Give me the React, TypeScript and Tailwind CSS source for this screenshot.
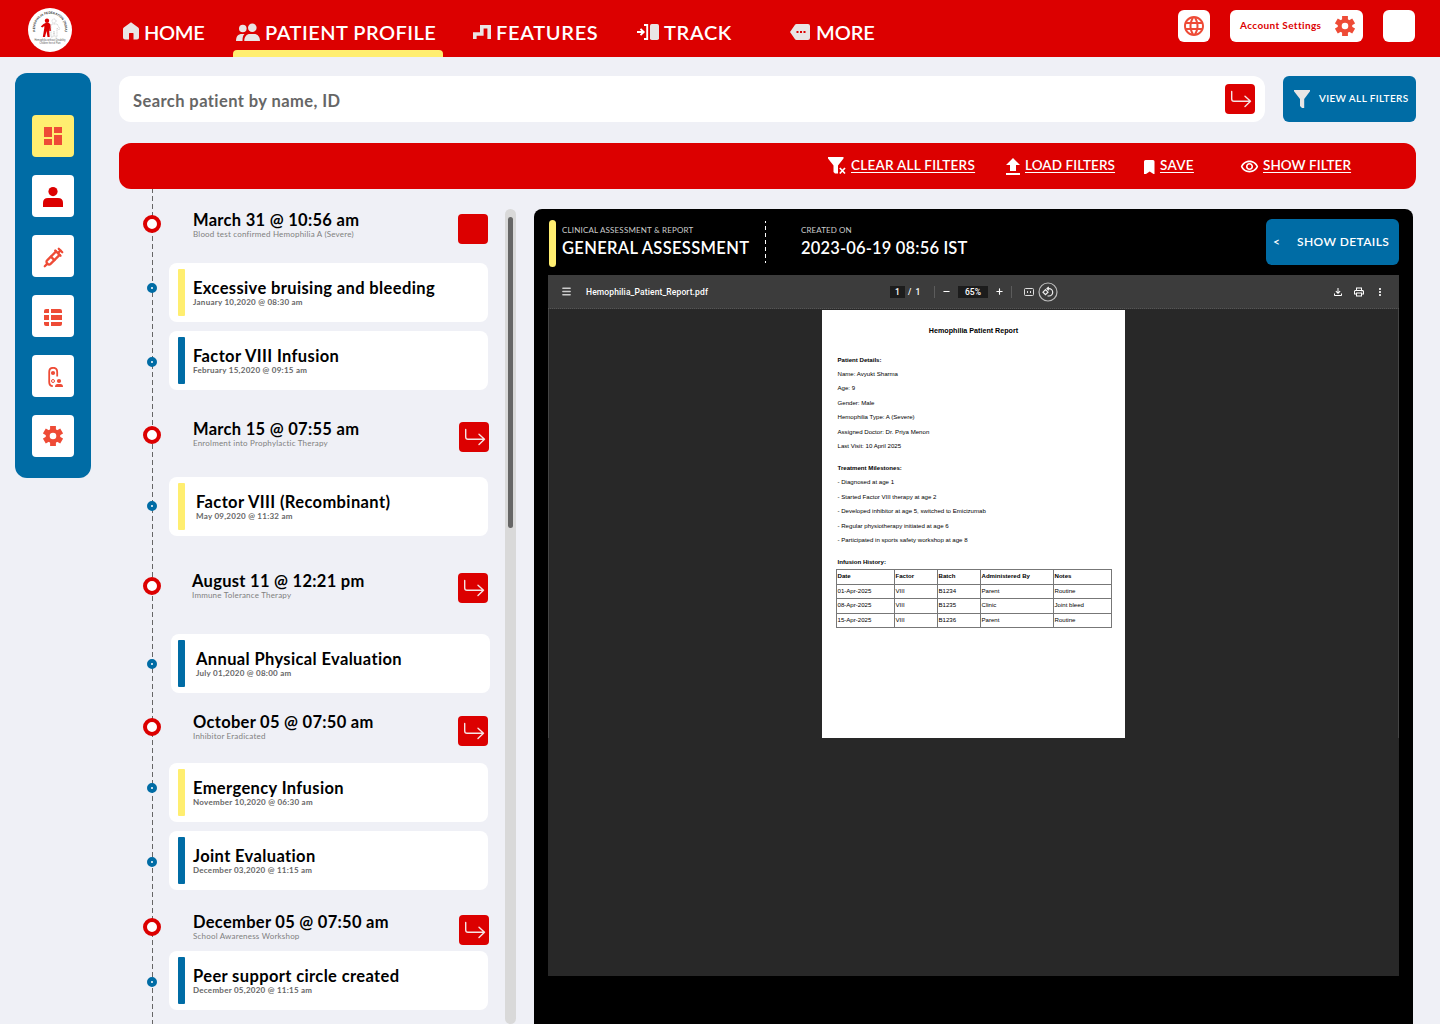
import type { ReactNode } from "react";
import { Menu, Minus, Plus, Syringe } from "lucide-react";
import {
  MdDashboard,
  MdLanguage,
  MdMoreVert,
  MdOutlineFileDownload,
  MdOutlinePrint,
  MdOutlineRemoveRedEye,
  MdUpload,
} from "react-icons/md";

type TimelineRow = {
  kind: "milestone" | "event";
  title: string;
  note: string;
  gap: string;
  marker: string;
  accent?: string;
  inset?: string;
  shift?: string;
  action?: string;
  blank?: boolean;
};

const YELLOW = "bg-[#ffee70]";
const BLUE = "bg-[#006ca5]";

const timeline: TimelineRow[] = [
  { kind: "milestone", title: "March 31 @ 10:56 am", note: "Blood test confirmed Hemophilia A (Severe)", gap: "mt-5", marker: "mt-1.5", action: "mt-[5px] mr-[3px]", blank: true },
  { kind: "event", title: "Excessive bruising and bleeding", note: "January 10,2020 @ 08:30 am", gap: "mt-3.5", marker: "mt-5", accent: YELLOW, inset: "ml-2" },
  { kind: "event", title: "Factor VIII Infusion", note: "February 15,2020 @ 09:15 am", gap: "mt-[9px]", marker: "mt-[26px]", accent: BLUE, inset: "ml-2" },
  { kind: "milestone", title: "March 15 @ 07:55 am", note: "Enrolment into Prophylactic Therapy", gap: "mt-7", marker: "mt-2", action: "mt-1 mr-0.5" },
  { kind: "event", title: "Factor VIII (Recombinant)", note: "May 09,2020 @ 11:32 am", gap: "mt-[19px]", marker: "mt-6", accent: YELLOW, inset: "ml-[11px]" },
  { kind: "milestone", title: "August 11 @ 12:21 pm", note: "Immune Tolerance Therapy", gap: "mt-[34px]", marker: "mt-[7px]", action: "mt-[3px] mr-[3px]", shift: "ml-[31px]" },
  { kind: "event", title: "Annual Physical Evaluation", note: "July 01,2020 @ 08:00 am", gap: "mt-6", marker: "mt-[25px]", accent: BLUE, inset: "ml-[11px]", shift: "ml-3.5 pl-[7px]" },
  { kind: "milestone", title: "October 05 @ 07:50 am", note: "Inhibitor Eradicated", gap: "mt-[18px]", marker: "mt-[7px]", action: "mt-[5px] mr-[3px]" },
  { kind: "event", title: "Emergency Infusion", note: "November 10,2020 @ 06:30 am", gap: "mt-3", marker: "mt-5", accent: YELLOW, inset: "ml-2" },
  { kind: "event", title: "Joint Evaluation", note: "December 03,2020 @ 11:15 am", gap: "mt-[9px]", marker: "mt-[26px]", accent: BLUE, inset: "ml-2" },
  { kind: "milestone", title: "December 05 @ 07:50 am", note: "School Awareness Workshop", gap: "mt-[21px]", marker: "mt-[7px]", action: "mt-1 mr-0.5" },
  { kind: "event", title: "Peer support circle created", note: "December 05,2020 @ 11:15 am", gap: "mt-0", marker: "mt-[26px]", accent: BLUE, inset: "ml-2" },
];

const details = [
  "Name: Avyukt Sharma",
  "Age: 9",
  "Gender: Male",
  "Hemophilia Type: A (Severe)",
  "Assigned Doctor: Dr. Priya Menon",
  "Last Visit: 10 April 2025",
];

const milestones = [
  "- Diagnosed at age 1",
  "- Started Factor VIII therapy at age 2",
  "- Developed inhibitor at age 5, switched to Emicizumab",
  "- Regular physiotherapy initiated at age 6",
  "- Participated in sports safety workshop at age 8",
];

const infusions = [
  ["01-Apr-2025", "VIII", "B1234", "Parent", "Routine"],
  ["08-Apr-2025", "VIII", "B1235", "Clinic", "Joint bleed"],
  ["15-Apr-2025", "VIII", "B1236", "Parent", "Routine"],
];

function Logo() {
  return (
    <svg viewBox="0 0 44 44" className="h-11 w-11 shrink-0">
      <circle cx="22" cy="22" r="22" fill="#fff" />
      <path id="logo-arc" d="M7.6 25A15 15 0 1 1 36.4 25" fill="none" />
      <text fontSize="3.2" fontWeight="700" fill="#333" fontFamily="Liberation Sans, sans-serif">
        <textPath href="#logo-arc" startOffset="1.5" textLength="52">HEMOPHILIA FEDERATION (INDIA)</textPath>
      </text>
      <g fill="#dc0000">
        <circle cx="19" cy="12.8" r="2.2" />
        <path d="M15.5 16l2-1h3.5l1.5 1.5.5 6.5h-1.5l-.5-3 .7 9H19.5l-1-6-1.5 6h-2.2l1.5-9v-2l-2 1.5-1.5-1z" />
      </g>
      <g fill="none" stroke="#bbb" strokeWidth=".6" strokeDasharray="1.2 .5">
        <circle cx="26" cy="13" r="2" />
        <path d="M24 16h5l3 5-1 1-2-2v9h-2l-1-6-1 6h-2v-12z" />
      </g>
      <g fill="#555" fontSize="2.9" fontFamily="Liberation Sans, sans-serif" textAnchor="middle">
        <text x="22" y="33.2" textLength="31" lengthAdjust="spacingAndGlyphs">Hemophilia without Disability</text>
        <text x="22" y="36.2" textLength="21" lengthAdjust="spacingAndGlyphs">Children free of Pain</text>
      </g>
    </svg>
  );
}

function HomeIcon() {
  return (
    <svg viewBox="0 0 16 18" className="mb-0.5 h-[18px] w-4" fill="#e9e5e5">
      <path d="M8 .3 15.2 5.5Q16 6.1 16 7V15.5Q16 17.5 14 17.5H10.5V11.5Q10.5 11 10 11H6.5Q6 11 6 11.5V17.5H2Q0 17.5 0 15.5V7Q0 6.1.8 5.5Z" />
    </svg>
  );
}

function PeopleIcon() {
  return (
    <svg viewBox="0 0 24 18" className="h-[18px] w-6" fill="#e9e5e5">
      <circle cx="6.8" cy="5.5" r="3.8" />
      <circle cx="16.3" cy="4.8" r="4.3" />
      <path d="M8.5 11C6.8 12.5 6.5 15 6.5 18H0C0 13.5 2 11 6 11ZM8.3 18C8.3 13.7 10.5 11 14 11H18C21.7 11 24 13.7 24 18Z" />
    </svg>
  );
}

function StairsIcon() {
  return (
    <svg viewBox="0 0 18 14" className="h-3.5 w-[18px]" fill="none" stroke="#e9e5e5" strokeWidth="3.6">
      <path d="M1.8 14V9H8.8V1.8H16.2V14" />
    </svg>
  );
}

function TrackIcon() {
  return (
    <svg viewBox="0 0 22 16" className="h-4 w-[22px]" fill="none" stroke="#fff" strokeWidth="1.9">
      <path d="M0 8H6.5M3.5 4.8 6.7 8 3.5 11.2M7 1H10.2V15H7" />
      <rect x="13" y="0" width="9" height="16" rx="1.8" fill="#e9e5e5" stroke="none" />
    </svg>
  );
}

function MoreTagIcon() {
  return (
    <svg viewBox="0 0 20 16" className="h-4 w-5">
      <path d="M6.5 0H18Q20 0 20 2V14Q20 16 18 16H6.5Q5.5 16 5 15.2L0 8 5 .8Q5.5 0 6.5 0Z" fill="#e9e5e5" />
      <path d="M6.5 7h2v2h-2zm3.5 0h2v2h-2zm3.5 0h2v2h-2z" fill="#dc0000" />
    </svg>
  );
}

function GearIcon() {
  return (
    <svg viewBox="0 0 20 20" className="h-5 w-5" stroke="#ee4b36">
      <circle cx="10" cy="10" r="5.3" fill="none" strokeWidth="4" />
      <g strokeWidth="5.8">
        <path d="M10 0V5M10 15V20" />
        <path d="M10 0V5M10 15V20" transform="rotate(60 10 10)" />
        <path d="M10 0V5M10 15V20" transform="rotate(120 10 10)" />
      </g>
    </svg>
  );
}

function FunnelIcon({ cross }: { cross?: boolean }) {
  return cross ? (
    <svg viewBox="0 0 18 18" className="h-[18px] w-[18px]">
      <path d="M0 0H15.5V1.5L10 8.5V16.5H7L5.5 15V8.5L0 1.5Z" fill="#fff" />
      <path d="M11.8 11 17 16.5M17 11 11.8 16.5" stroke="#fff" strokeWidth="1.7" />
    </svg>
  ) : (
    <svg viewBox="0 0 16 18" className="h-[18px] w-4" fill="#e9e5e5">
      <path d="M0 0H16V1.2L10.2 9V18H8L6 16V9L0 1.2Z" />
    </svg>
  );
}

function ArrowButton({ className = "", blank }: { className?: string; blank?: boolean }) {
  return (
    <button className={`h-[30px] w-[30px] shrink-0 rounded bg-[#dc0000] ${className}`}>
      {!blank && (
        <svg viewBox="0 0 30 30" className="h-[30px] w-[30px]" fill="none" stroke="#f5e5e5" strokeWidth="1.4" strokeLinecap="round" strokeLinejoin="round">
          <path d="M6.7 7.5V15Q6.7 17.3 9 17.3H25.5M20 12.3 25.5 17.3 20 22.5" />
        </svg>
      )}
    </button>
  );
}

function NavItem({ icon, label, className }: { icon: ReactNode; label: string; className: string }) {
  return (
    <a className={`flex items-center whitespace-nowrap text-xl font-semibold text-white ${className}`}>
      {icon}
      <span>{label}</span>
    </a>
  );
}

function Header() {
  return (
    <header className="flex h-[57px] bg-[#dc0000] pl-7">
      <div className="mt-2">
        <Logo />
      </div>
      <nav className="flex h-[57px]">
        <NavItem icon={<HomeIcon />} label="HOME" className="ml-[51px] w-[110px] gap-[5px] pt-1.5 tracking-[-0.35px]" />
        <div className="flex w-[210px] flex-col justify-between">
          <NavItem icon={<PeopleIcon />} label="PATIENT PROFILE" className="gap-[5px] pt-[18px] pl-[3px] tracking-[0.48px]" />
          <div className="h-[7px] rounded-t-sm bg-[#ffee70]" />
        </div>
        <NavItem icon={<StairsIcon />} label="FEATURES" className="ml-[30px] w-[164px] gap-[5px] pt-1.5 tracking-[0.68px]" />
        <NavItem icon={<TrackIcon />} label="TRACK" className="w-[153px] gap-[5px] pt-1.5 tracking-[0.65px]" />
        <NavItem icon={<MoreTagIcon />} label="MORE" className="gap-[6px] pt-1.5 tracking-[-0.1px]" />
      </nav>
      <div className="mt-2.5 mr-[25px] ml-auto flex h-8 gap-5">
        <button className="flex w-8 items-center justify-center rounded-md bg-white">
          <MdLanguage className="h-6 w-6 text-[#ee4b36]" />
        </button>
        <button className="flex w-[133px] items-center justify-between rounded-md bg-white pr-2 pb-px pl-2.5 text-[10px] font-bold tracking-[0.37px] text-[#dc0000]">
          Account Settings
          <GearIcon />
        </button>
        <button className="w-8 rounded-md bg-white" />
      </div>
    </header>
  );
}

function Sidebar() {
  const tile = "flex h-[42px] w-[42px] items-center justify-center rounded text-[#ee4b36]";
  return (
    <aside className="mt-4 ml-[15px] flex h-[405px] w-[76px] shrink-0 flex-col items-center gap-[18px] rounded-xl bg-[#006ca5] pt-[42px]">
      <button className={`${tile} bg-[#ffee70]`}>
        <MdDashboard className="h-6 w-6" />
      </button>
      <button className={`${tile} bg-white`}>
        <svg viewBox="0 0 20 20" className="mt-0.5 h-5 w-5" fill="#dc0000">
          <circle cx="10" cy="4.6" r="4.6" />
          <path d="M0 20V16Q0 11 5 11H15Q20 11 20 16V20Z" />
        </svg>
      </button>
      <button className={`${tile} bg-white`}>
        <Syringe className="mt-0.5 h-[21px] w-[21px]" strokeWidth={2.6} />
      </button>
      <button className={`${tile} bg-white`}>
        <svg viewBox="0 0 18 18" className="mt-1 h-[18px] w-[18px]" fill="#ee4b36">
          <path d="M2 0H5V4H0V2Q0 0 2 0ZM7 0H16Q18 0 18 2V4H7ZM0 6H5V11H0ZM7 6H18V11H7ZM0 13H5V17H2Q0 17 0 15ZM7 13H18V15Q18 17 16 17H7Z" />
        </svg>
      </button>
      <button className={`${tile} bg-white`}>
        <svg viewBox="0 0 20 20" className="mt-0.5 h-5 w-5" fill="#ee4b36">
          <path d="M14.2 9.5V5Q14.2.8 10.2.8T6.2 5V15Q6.2 18.8 9.8 19.2" fill="none" stroke="#ee4b36" strokeWidth="1.8" />
          <circle cx="10" cy="6" r="2.1" />
          <circle cx="10" cy="14" r="1.5" fill="none" stroke="#ee4b36" />
          <circle cx="16" cy="14" r="2.1" />
          <path d="M12 20Q12 17 14.5 17H17.5Q20 17 20 20Z" />
        </svg>
      </button>
      <button className={`${tile} bg-white`}>
        <GearIcon />
      </button>
    </aside>
  );
}

function SearchRow() {
  return (
    <div className="mt-[19px] flex gap-[18px]">
      <div className="flex h-[46px] w-[1146px] items-center justify-between rounded-xl bg-white pr-2.5 pl-3.5">
        <span className="pt-1 text-[16.5px] font-bold tracking-[0.42px] text-[#666]">Search patient by name, ID</span>
        <ArrowButton />
      </div>
      <button className="flex h-[46px] w-[133px] items-center gap-[9px] rounded-md bg-[#006ca5] pl-[11px] text-[10px] font-semibold tracking-[0.37px] whitespace-nowrap text-white">
        <FunnelIcon />
        <span className="pb-0.5">VIEW ALL FILTERS</span>
      </button>
    </div>
  );
}

function FilterBar() {
  const item = "flex items-center text-[13.5px] font-semibold text-white";
  const label = "pb-0.5 underline decoration-1 underline-offset-2";
  return (
    <div className="mt-[21px] flex h-[46px] rounded-xl bg-[#dc0000] pl-[709px]">
      <a className={`${item} w-[176px] gap-[5px] tracking-[0.26px]`}>
        <FunnelIcon cross />
        <span className={label}>CLEAR ALL FILTERS</span>
      </a>
      <a className={`${item} w-[139px] tracking-[0.08px]`}>
        <MdUpload className="mt-0.5 -ml-[3px] h-6 w-6" />
        <span className={label}>LOAD FILTERS</span>
      </a>
      <a className={`${item} w-[97px] gap-[5px] tracking-[0.3px]`}>
        <svg viewBox="0 0 11 14" className="mt-0.5 ml-px h-3.5 w-[11px]" fill="#fff">
          <path d="M1.5 0H9Q10.5 0 10.5 1.5V14H9.5L5.7 11.5 2 14H0V1.5Q0 0 1.5 0Z" />
        </svg>
        <span className={label}>SAVE</span>
      </a>
      <a className={`${item} gap-1 tracking-[0.06px]`}>
        <MdOutlineRemoveRedEye className="h-[19px] w-[19px]" />
        <span className={label}>SHOW FILTER</span>
      </a>
    </div>
  );
}

function Timeline() {
  return (
    <section className="relative h-[835px] w-[372px] overflow-hidden">
      <svg className="absolute top-0 left-[33px] h-full w-px">
        <line x1="0.5" x2="0.5" y1="-1" y2="835" stroke="#666" strokeDasharray="5 3" />
      </svg>
      {timeline.map((row) =>
        row.kind === "milestone" ? (
          <div key={row.title} className={`relative flex h-10 items-start pl-6 ${row.gap}`}>
            <span className={`h-[18px] w-[18px] shrink-0 rounded-full border-4 border-[#dc0000] bg-white ${row.marker}`} />
            <div className={`flex-1 ${row.shift ?? "ml-8"}`}>
              <h2 className="pt-px text-[16.5px] leading-5 font-bold tracking-[0.29px] text-black">{row.title}</h2>
              <p className="-mt-px text-[8px] leading-[10px] tracking-[0.2px] text-[#808080]">{row.note}</p>
            </div>
            <ArrowButton className={row.action} blank={row.blank} />
          </div>
        ) : (
          <div key={row.title} className={`relative flex h-[59px] items-start pl-7 ${row.gap}`}>
            <span className={`h-2.5 w-2.5 shrink-0 rounded-full border-4 border-[#006ca5] bg-white ${row.marker}`} />
            <div className={`flex h-[59px] w-[319px] items-center rounded-lg bg-white ${row.shift ?? "ml-3 pl-[9px]"}`}>
              <div className={`h-[47px] w-[7px] rounded-[1px] ${row.accent}`} />
              <div className={`pb-px ${row.inset}`}>
                <h3 className="pt-px text-[16.5px] leading-5 font-bold tracking-[0.37px] text-black">{row.title}</h3>
                <p className="-mt-px text-[8px] leading-[10px] font-bold tracking-[0.26px] text-[#666]">{row.note}</p>
              </div>
            </div>
          </div>
        ),
      )}
    </section>
  );
}

function PdfToolbar() {
  return (
    <div className="flex h-[34px] items-center border-b border-dotted border-[#555] bg-[#3c3c3c] font-['Roboto',sans-serif] text-[8.5px] font-medium text-white">
      <Menu className="ml-[13px] h-[11px] w-[11px] text-[#ccc]" strokeWidth={3} />
      <span className="ml-3.5 w-[304px] pt-px tracking-[0.12px]">Hemophilia_Patient_Report.pdf</span>
      <span className="flex h-3 w-[15px] items-center justify-center bg-[#1c1c1c] pt-px">1</span>
      <span className="ml-[3px] w-[26px] pt-px whitespace-pre">/  1</span>
      <span className="h-3 w-px bg-[#5c5c5c]" />
      <Minus className="mx-[7px] h-[9px] w-[9px]" strokeWidth={3} />
      <span className="flex h-3 w-[30px] items-center justify-center bg-[#1c1c1c] pt-px">65%</span>
      <Plus className="mx-[7px] h-[9px] w-[9px]" strokeWidth={3} />
      <span className="h-3 w-px bg-[#5c5c5c]" />
      <svg viewBox="0 0 10 8" className="ml-3 h-2 w-2.5" fill="none" stroke="#ddd">
        <rect x=".5" y=".5" width="9" height="7" rx="1" />
        <path d="M3.5 3V5M6.5 3V5" />
      </svg>
      <svg viewBox="0 0 20 20" className="ml-1 h-5 w-5" fill="none" stroke="#eee" strokeWidth="1.2">
        <circle cx="10" cy="10" r="9" stroke="#bbb" />
        <path d="M7.5 7.7 10 10.2 7.5 12.7 5 10.2ZM10.8 5 9 6.6 10.8 8.3M9.5 6.6H11A3.7 3.7 0 0 1 11 14H9.5" />
      </svg>
      <MdOutlineFileDownload className="ml-auto h-3 w-3" />
      <MdOutlinePrint className="ml-[9px] h-3 w-3" />
      <MdMoreVert className="mr-[13px] ml-[9px] h-3 w-3" />
    </div>
  );
}

function PdfPage() {
  return (
    <article className="mx-auto h-[428px] w-[303px] bg-white px-[14px] pt-[15px] font-['Liberation_Sans',sans-serif] text-[6.1px] leading-[14.45px] text-black">
      <h1 className="text-center text-[7.15px] leading-3 font-bold">Hemophilia Patient Report</h1>
      <div className="mt-[15.5px] pl-[1.5px]">
        <h2 className="font-bold">Patient Details:</h2>
        {details.map((line) => (
          <p key={line}>{line}</p>
        ))}
        <h2 className="mt-[7.2px] font-bold">Treatment Milestones:</h2>
        {milestones.map((line) => (
          <p key={line}>{line}</p>
        ))}
        <h2 className="mt-[7.2px] font-bold">Infusion History:</h2>
      </div>
      <table className="w-[275px] table-fixed border-collapse text-left">
        <colgroup>
          <col className="w-[58px]" />
          <col className="w-[43px]" />
          <col className="w-[43px]" />
          <col className="w-[73px]" />
          <col className="w-[58px]" />
        </colgroup>
        <thead>
          <tr>
            {["Date", "Factor", "Batch", "Administered By", "Notes"].map((h) => (
              <th key={h} className="border border-[#777] p-0 pb-px pl-[0.5px] leading-[12.5px] font-bold">{h}</th>
            ))}
          </tr>
        </thead>
        <tbody>
          {infusions.map((row) => (
            <tr key={row[0]}>
              {row.map((cell) => (
                <td key={cell} className="border border-[#777] p-0 pb-px pl-[0.5px] leading-[12.5px]">{cell}</td>
              ))}
            </tr>
          ))}
        </tbody>
      </table>
    </article>
  );
}

function ReportPanel() {
  return (
    <section className="mt-5 ml-[18px] h-[815px] w-[879px] rounded-t-lg bg-black px-3.5 pt-2.5 text-white">
      <div className="flex h-14 items-start">
        <div className="mt-px ml-px h-[47px] w-[7px] rounded-sm bg-[#ffee70]" />
        <div className="ml-1.5 w-[203px] pt-1.5 whitespace-nowrap">
          <p className="text-[8px] leading-[10px] tracking-[0.17px] text-[#ccc]">CLINICAL ASSESSMENT &amp; REPORT</p>
          <h2 className="mt-[3px] text-[16.5px] leading-5 font-semibold tracking-[0.33px]">GENERAL ASSESSMENT</h2>
        </div>
        <svg className="mt-0.5 h-[42px] w-px">
          <line x1="0.5" x2="0.5" y1="0" y2="42" stroke="#fff" strokeDasharray="4 3" strokeDashoffset="2" />
        </svg>
        <div className="ml-[35px] pt-1.5">
          <p className="text-[8px] leading-[10px] tracking-[0.1px] text-[#ccc]">CREATED ON</p>
          <h2 className="mt-[3px] text-[16.5px] leading-5 font-semibold tracking-[0.17px]">2023-06-19 08:56 IST</h2>
        </div>
        <button className="ml-auto flex h-[46px] w-[133px] items-center rounded-md bg-[#006ca5] pl-[7px] text-left text-xs font-semibold tracking-[0.4px] whitespace-nowrap">
          <span className="w-6 shrink-0">&lt;</span>
          SHOW DETAILS
        </button>
      </div>
      <div className="h-[701px] bg-[#282828]">
        <PdfToolbar />
        <div className="h-[429px] border-x border-[#444] pt-px">
          <PdfPage />
        </div>
      </div>
    </section>
  );
}

export default function App() {
  return (
    <div className="h-[1024px] w-[1440px] overflow-hidden bg-[#eff0f6] font-['Lato',sans-serif]">
      <Header />
      <div className="flex">
        <Sidebar />
        <main className="ml-7 w-[1297px]">
          <SearchRow />
          <FilterBar />
          <div className="flex">
            <Timeline />
            <div className="mt-5 ml-3.5 h-[815px] w-[11px] rounded-full bg-[#d9d9d9] pt-2">
              <div className="mx-auto h-[311px] w-[5px] rounded-full bg-[#666]" />
            </div>
            <ReportPanel />
          </div>
        </main>
      </div>
    </div>
  );
}
